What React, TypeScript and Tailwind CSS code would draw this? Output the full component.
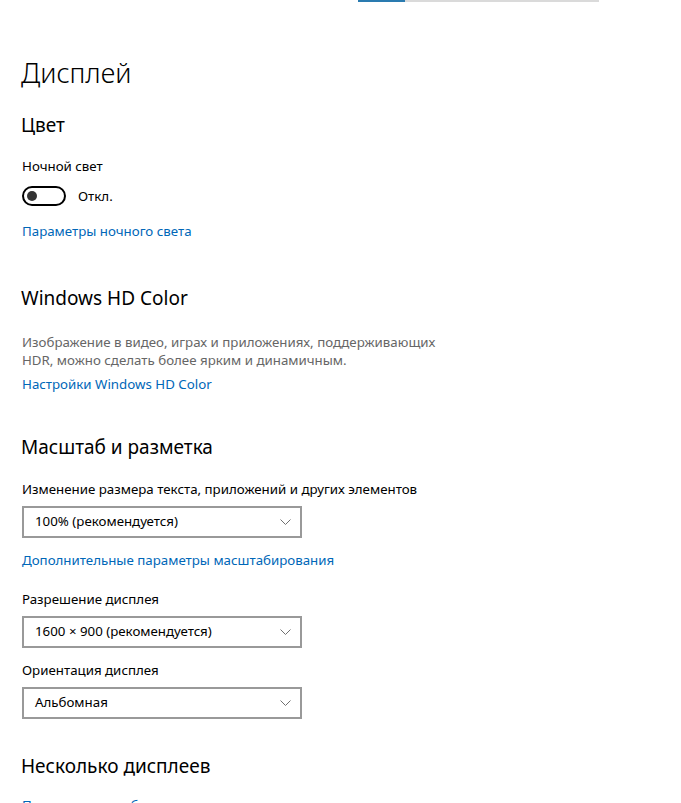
import { useState } from "react";

type Option = { label: string; value: string };

const FONT = "font-['Segoe_UI','Noto_Sans','Open_Sans',sans-serif]";

function Chevron() {
  return (
    <svg width="11" height="6" viewBox="0 0 11 6" fill="none">
      <polyline points="0.5,0.5 5.5,5.5 10.5,0.5" stroke="#707070" strokeWidth="1" />
    </svg>
  );
}

function Dropdown({ value, className = "" }: { value: string; className?: string }) {
  return (
    <button
      type="button"
      className={`flex h-[32px] w-[280px] items-center justify-between border-2 border-[#999999] bg-white pl-[11px] pr-[9px] text-left text-[13.3px] text-black ${className}`}
    >
      <span>{value}</span>
      <Chevron />
    </button>
  );
}

function SectionTitle({ children, className = "" }: { children: React.ReactNode; className?: string }) {
  return <h2 className={`text-[19px] leading-[28px] text-black ${className}`}>{children}</h2>;
}

function Label({ children, className = "" }: { children: React.ReactNode; className?: string }) {
  return <p className={`text-[13.3px] leading-[20px] text-black ${className}`}>{children}</p>;
}

function Link({ children, className = "" }: { children: React.ReactNode; className?: string }) {
  return (
    <a href="#" className={`block w-fit text-[13.3px] leading-[20px] text-[#0067b8] ${className}`}>
      {children}
    </a>
  );
}

const ORIENTATIONS: Option[] = [
  { label: "Альбомная", value: "landscape" },
  { label: "Книжная", value: "portrait" },
];

export default function App() {
  const [nightLight, setNightLight] = useState(false);

  return (
    <div className={`h-[803px] w-[681px] overflow-hidden bg-white ${FONT}`}>
      {/* brightness slider remnant */}
      <div className="ml-[358px] flex h-[2px] w-[241px]">
        <div className="w-[47px] bg-[#2a7bb0]" />
        <div className="flex-1 bg-[#dadada]" />
      </div>

      <div className="px-[21px]">
        <h1 className="mt-[51px] text-[27px] font-light leading-[40px] text-black">Дисплей</h1>

        <SectionTitle className="mt-[18px]">Цвет</SectionTitle>
        <Label className="mt-[17px] pl-px">Ночной свет</Label>
        <div className="mt-[10px] flex items-center pl-px">
          <button
            type="button"
            onClick={() => setNightLight(!nightLight)}
            className="flex h-[20px] w-[44px] items-center rounded-full border-2 border-black px-[3px]"
          >
            <span className={`h-[10px] w-[10px] rounded-full bg-[#333333] ${nightLight ? "ml-auto" : ""}`} />
          </button>
          <span className="ml-[12px] text-[13.3px] leading-[20px] text-black">{nightLight ? "Вкл." : "Откл."}</span>
        </div>
        <Link className="mt-[15px] pl-px">Параметры ночного света</Link>

        <SectionTitle className="mt-[43px]">Windows HD Color</SectionTitle>
        <p className="mt-[21px] w-[430px] pl-px text-[13.3px] leading-[18px] text-[#666666]">
          Изображение в видео, играх и приложениях, поддерживающих HDR, можно сделать более ярким и динамичным.
        </p>
        <Link className="mt-[5px] pl-px">Настройки Windows HD Color</Link>

        <SectionTitle className="mt-[39px]">Масштаб и разметка</SectionTitle>
        <Label className="mt-[18px] pl-px">Изменение размера текста, приложений и других элементов</Label>
        <Dropdown value="100% (рекомендуется)" className="ml-px mt-[7px]" />
        <Link className="mt-[12px] pl-px">Дополнительные параметры масштабирования</Link>

        <Label className="mt-[19px] pl-px">Разрешение дисплея</Label>
        <Dropdown value="1600 × 900 (рекомендуется)" className="ml-px mt-[7px]" />

        <Label className="mt-[12px] pl-px">Ориентация дисплея</Label>
        <Dropdown value={ORIENTATIONS[0].label} className="ml-px mt-[7px]" />

        <SectionTitle className="mt-[33px]">Несколько дисплеев</SectionTitle>
        <Link className="mt-[15px] pl-px">Подключиться к беспроводному дисплею</Link>
      </div>
    </div>
  );
}
